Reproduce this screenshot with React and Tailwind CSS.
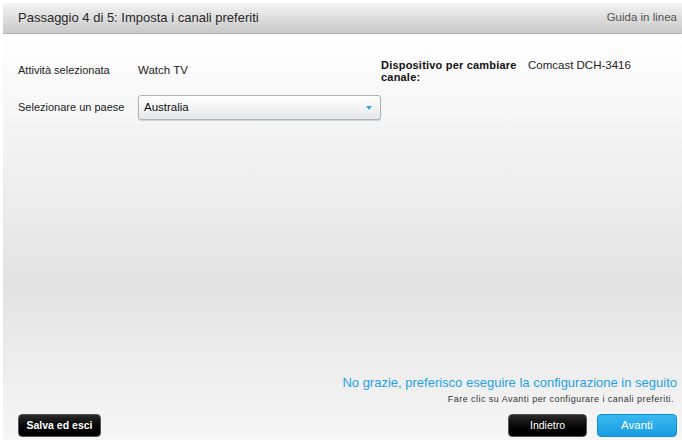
export default function App() {
  return (
    <div className="w-[682px] h-[440px] bg-white pl-[3px] pt-[3px] overflow-hidden" style={{ fontFamily: '"Liberation Sans", Arial, sans-serif' }}>
      <div className="h-[437px] flex flex-col">
        {/* title bar */}
        <div className="h-[31px] flex items-center justify-between pl-[15px] pr-[5px] bg-gradient-to-b from-[#f4f4f4] to-[#c8c8c8] border-b border-[#b5b5b5]">
          <span className="text-[13px] text-[#2a2a2a]">Passaggio 4 di 5: Imposta i canali preferiti</span>
          <span className="text-[11.5px] text-[#555]">Guida in linea</span>
        </div>

        {/* content */}
        <div className="flex-1 flex flex-col bg-[linear-gradient(to_bottom,#ffffff_0%,#f2f2f2_28%,#e3e3e3_62%,#f6f6f6_100%)] pl-[15px] pr-[5px]">
          <div className="flex items-center pt-[25px]">
            <div className="flex w-[363px]">
              <span className="w-[120px] text-[11px] text-[#222]">Attività selezionata</span>
              <span className="text-[11.5px] text-[#222]">Watch TV</span>
            </div>
            <div className="w-[147px] text-[11px] font-bold text-[#111] leading-[12px] tracking-[0.2px]">
              Dispositivo per cambiare<br />canale:
            </div>
            <span className="self-start text-[11.5px] text-[#222] leading-[12px]">Comcast DCH-3416</span>
          </div>

          <div className="flex items-center mt-[12px]">
            <span className="w-[120px] text-[11px] text-[#222]">Selezionare un paese</span>
            <div className="w-[243px] h-[25px] rounded-[3px] border border-[#aeb3b8] bg-gradient-to-b from-white to-[#e6e7e9] shadow-[0_1px_1px_rgba(0,0,0,0.15)] flex items-center justify-between pl-[5px] pr-[8px]">
              <span className="text-[11.5px] text-[#111]">Australia</span>
              <svg width="6" height="4" viewBox="0 0 6 4"><path d="M0 0h6L3 4z" fill="#3aa6e0" /></svg>
            </div>
          </div>

          <div className="flex-1" />

          <div className="flex flex-col items-end">
            <span className="text-[13px] text-[#1fa3e3] leading-[15px]">No grazie, preferisco eseguire la configurazione in seguito</span>
            <span className="text-[9px] text-[#333] mt-[4px] mr-[3px] leading-[10px] tracking-[0.45px]">Fare clic su Avanti per configurare i canali preferiti.</span>
          </div>

          <div className="flex items-center justify-between mt-[10px] mb-[3px]">
            <button className="w-[83px] h-[23px] rounded-[4px] bg-gradient-to-b from-[#2a2a2a] to-black border border-[#555] text-white text-[10.5px] font-bold">Salva ed esci</button>
            <div className="flex gap-[10px]">
              <button className="w-[79px] h-[23px] rounded-[4px] bg-gradient-to-b from-[#2a2a2a] to-black border border-[#555] text-white text-[10.5px]">Indietro</button>
              <button className="w-[80px] h-[23px] rounded-[4px] bg-gradient-to-b from-[#39b8f0] to-[#149ee2] border border-[#0f8fd0] text-white text-[11.5px]">Avanti</button>
            </div>
          </div>
        </div>
      </div>
    </div>
  );
}
